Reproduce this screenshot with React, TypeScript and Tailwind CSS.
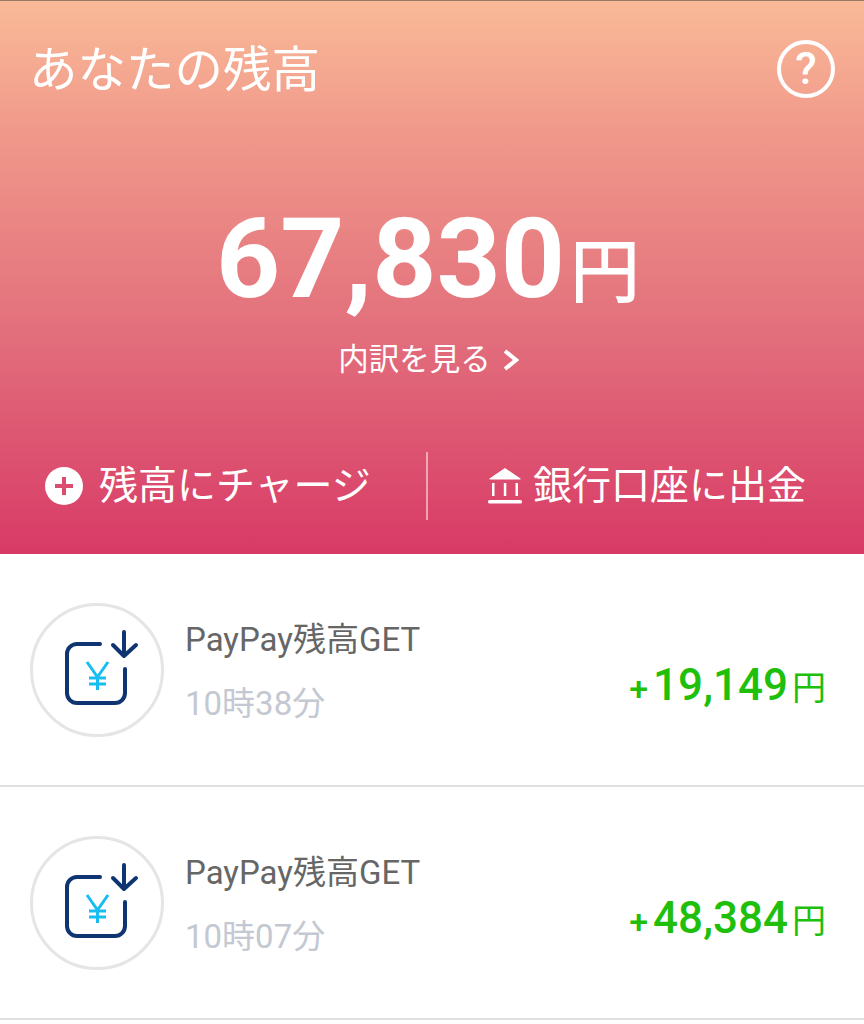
const FONT = "font-['Roboto','Noto_Sans_CJK_JP',sans-serif]";

function YenIcon() {
  return (
    <svg width="134" height="134" viewBox="0 0 134 134" fill="none">
      <circle cx="67" cy="67" r="65.500" stroke="#e4e5e7" strokeWidth="3" />
      <path
        d="M70 41H47a10 10 0 0 0-10 10v39a10 10 0 0 0 10 10h38a10 10 0 0 0 10-10V66"
        stroke="#0e3572"
        strokeWidth="4"
        strokeLinecap="round"
      />
      <path
        d="M94 29v24M83 42l11 11 12-11"
        stroke="#0e3572"
        strokeWidth="4"
        strokeLinecap="round"
        strokeLinejoin="round"
      />
      <path
        d="M57 59l10.500 15 10.500-15M67.500 74v13M59 75h17M59 81h17"
        stroke="#16bdf0"
        strokeWidth="3"
      />
    </svg>
  );
}

function BankIcon() {
  return (
    <svg width="36" height="36" viewBox="0 0 36 36" fill="white">
      <path d="M18 0L33.500 10.500a.6.6 0 0 1-.3 1H2.800a.6.6 0 0 1-.3-1z" />
      <rect x="1" y="32" width="34" height="3.500" rx="1.500" />
      <rect x="5" y="15" width="2.500" height="13" />
      <rect x="16.800" y="15" width="2.500" height="13" />
      <rect x="28.500" y="15" width="2.500" height="13" />
    </svg>
  );
}

function HistoryRow({ time, amount }: { time: string; amount: string }) {
  return (
    <div className="flex h-[233px] items-start border-b-2 border-[#e0e0e0] bg-white pl-[30px] pr-[38px]">
      <div className="mt-[49px] shrink-0">
        <YenIcon />
      </div>
      <div className="ml-[21px] mt-[65px] flex-1">
        <p className="text-[33px] leading-[42px] text-[#666666]">PayPay残高GET</p>
        <p className="mt-[22px] text-[33px] leading-[42px] text-[#c4c8d2]">{time}</p>
      </div>
      <div className="mt-[105px] flex items-baseline text-[#20bf0c]">
        <span className="mr-[5px] text-[34px] leading-[52px] font-medium">+</span>
        <span className="text-[44px] leading-[52px] font-medium">{amount}</span>
        <span className="ml-[4px] text-[34px] leading-[52px]">円</span>
      </div>
    </div>
  );
}

export default function App() {
  return (
    <div className={`${FONT} h-[1024px] w-[864px] overflow-hidden bg-white`}>
      <div className="flex h-[554px] flex-col border-t border-[#9b7866] bg-[linear-gradient(180deg,#f9ba97_0%,#f0978a_25%,#e26f7c_60%,#d83a66_100%)] text-white">
        <div className="flex items-start justify-between pl-[29px] pr-[29px] pt-[39px]">
          <h1 className="text-[48.500px] leading-[62px] font-normal">あなたの残高</h1>
          <div className="flex h-[58px] w-[58px] items-center justify-center rounded-full border-[4px] border-white text-[44px] leading-none font-medium">
            ?
          </div>
        </div>
        <div className="mt-[92px] flex items-baseline justify-center pr-[8px]">
          <span className="text-[112px] leading-[130px] font-bold">67,830</span>
          <span className="ml-[5px] text-[70px] leading-[130px] font-medium">円</span>
        </div>
        <div className="mt-[2px] flex items-center justify-center gap-[12px] pr-[7px] text-[30.500px] leading-[40px]">
          <span>内訳を見る</span>
          <svg width="16" height="24" viewBox="0 0 16 24" fill="none">
            <path d="M2 3l11 9-11 9" stroke="white" strokeWidth="4" />
          </svg>
        </div>
        <div className="mt-[72px] flex items-center">
          <div className="flex h-[68px] w-[426px] items-center pl-[45px]">
            <svg width="38" height="38" viewBox="0 0 38 38">
              <circle cx="19" cy="19" r="19" fill="white" />
              <path d="M19 10v18M10 19h18" stroke="#dc4c70" strokeWidth="4" />
            </svg>
            <span className="ml-[16px] text-[39px] leading-[50px]">残高にチャージ</span>
          </div>
          <div className="h-[68px] w-[2px] bg-white/50" />
          <div className="flex h-[68px] flex-1 items-center pl-[59px]">
            <BankIcon />
            <span className="ml-[10px] text-[39px] leading-[50px]">銀行口座に出金</span>
          </div>
        </div>
      </div>
      <HistoryRow time="10時38分" amount="19,149" />
      <HistoryRow time="10時07分" amount="48,384" />
    </div>
  );
}
